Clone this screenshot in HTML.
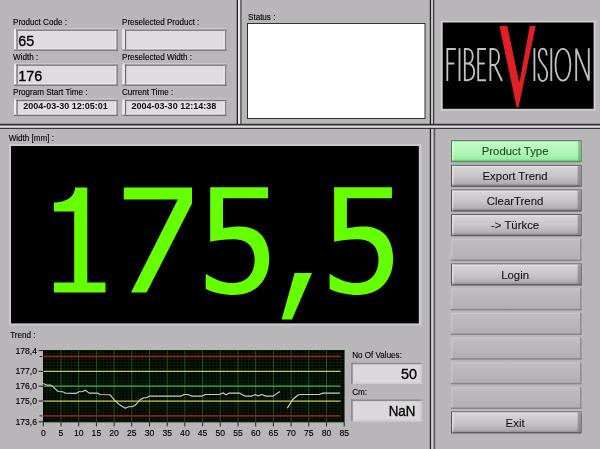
<!DOCTYPE html>
<html><head><meta charset="utf-8"><title>FiberVision</title>
<style>
html,body{margin:0;padding:0;background:#b8b6b8;overflow:hidden;}
body{width:600px;height:449px;font-family:"Liberation Sans",sans-serif;}
svg{display:block;position:absolute;left:0;top:0;will-change:transform;filter:blur(0.35px);}
text{font-family:"Liberation Sans",sans-serif;}
.l{font-size:8.7px;fill:#000;stroke:#000;stroke-width:0.12px;}
.v{font-size:15.2px;fill:#000;stroke:#000;stroke-width:0.35px;}
.t{font-size:9px;font-weight:bold;fill:#101010;}
.b{font-size:11px;fill:#141414;text-anchor:middle;stroke:#141414;stroke-width:0.1px;}
.ax{font-size:8.6px;fill:#000;stroke:#000;stroke-width:0.14px;}
</style></head><body>
<svg width="600" height="449" viewBox="0 0 600 449">
<defs>
<linearGradient id="gb" x1="0" y1="0" x2="0" y2="1">
<stop offset="0" stop-color="#d8d6d8"/><stop offset="0.55" stop-color="#c6c4c6"/><stop offset="1" stop-color="#aaa8aa"/>
</linearGradient>
<linearGradient id="gg" x1="0" y1="0" x2="0" y2="1">
<stop offset="0" stop-color="#c2fac9"/><stop offset="0.55" stop-color="#b0f6b9"/><stop offset="1" stop-color="#92ee9c"/>
</linearGradient>
<linearGradient id="gd" x1="0" y1="0" x2="0" y2="1">
<stop offset="0" stop-color="#c0bec0"/><stop offset="1" stop-color="#b0aeb0"/>
</linearGradient>
</defs>
<rect x="0" y="0" width="600" height="449" fill="#b8b6b8"/>

<!-- separators -->
<rect x="236.7" y="0" width="1.5" height="125" fill="#222222"/>
<rect x="238.1" y="0" width="2.1" height="125" fill="#ecebec"/>
<rect x="240.2" y="0" width="1.5" height="125" fill="#5c5c5c"/>
<rect x="429.8" y="0" width="1.4" height="125" fill="#1e1e1e"/>
<rect x="431.1" y="0" width="1.9" height="125" fill="#c8c7c8"/>
<rect x="433" y="0" width="1.2" height="125" fill="#3c3c3c"/>
<rect x="429.8" y="128" width="1.5" height="321" fill="#1e1e1e"/>
<rect x="431.2" y="128" width="2.4" height="321" fill="#cecdce"/>
<rect x="433.6" y="128" width="1.6" height="321" fill="#585858"/>
<rect x="0" y="123.8" width="600" height="5.1" fill="#2c2c2c"/>
<rect x="0" y="125.5" width="600" height="2.3" fill="#dedcde"/>

<text class="l" transform="translate(13,24.6) scale(0.93,1)">Product Code :</text>
<text class="l" transform="translate(122,24.6) scale(0.93,1)">Preselected Product :</text>
<text class="l" transform="translate(13,59.6) scale(0.93,1)">Width :</text>
<text class="l" transform="translate(122,59.6) scale(0.93,1)">Preselected Width :</text>
<text class="l" transform="translate(13,94.6) scale(0.93,1)">Program Start Time :</text>
<text class="l" transform="translate(122,94.6) scale(0.93,1)">Current Time :</text>
<rect x="14" y="28.1" width="104" height="1.5" fill="#cbc9cb"/>
<rect x="14" y="29.5" width="104" height="21.3" fill="#dedcde"/>
<rect x="14" y="29.5" width="2.4" height="20.7" fill="#efeeef"/>
<rect x="16.4" y="29.5" width="1.3" height="20.0" fill="#6e6e6e"/>
<rect x="16.4" y="29.5" width="101.6" height="1.3" fill="#727072"/>
<rect x="115" y="30.8" width="1.5" height="18.7" fill="#ebeaeb"/>
<rect x="17.7" y="48.3" width="98.8" height="1.3" fill="#ecebec"/>
<rect x="116.4" y="29.5" width="1.6" height="21.3" fill="#878587"/>
<rect x="14" y="49.5" width="104" height="1.4" fill="#757375"/>
<rect x="122.5" y="28.1" width="104" height="1.5" fill="#cbc9cb"/>
<rect x="122.5" y="29.5" width="104" height="21.3" fill="#dedcde"/>
<rect x="122.5" y="29.5" width="2.4" height="20.7" fill="#efeeef"/>
<rect x="124.9" y="29.5" width="1.3" height="20.0" fill="#6e6e6e"/>
<rect x="124.9" y="29.5" width="101.6" height="1.3" fill="#727072"/>
<rect x="223.5" y="30.8" width="1.5" height="18.7" fill="#ebeaeb"/>
<rect x="126.2" y="48.3" width="98.8" height="1.3" fill="#ecebec"/>
<rect x="224.9" y="29.5" width="1.6" height="21.3" fill="#878587"/>
<rect x="122.5" y="49.5" width="104" height="1.4" fill="#757375"/>
<rect x="14" y="63.1" width="104" height="1.5" fill="#cbc9cb"/>
<rect x="14" y="64.5" width="104" height="21.3" fill="#dedcde"/>
<rect x="14" y="64.5" width="2.4" height="20.7" fill="#efeeef"/>
<rect x="16.4" y="64.5" width="1.3" height="20.0" fill="#6e6e6e"/>
<rect x="16.4" y="64.5" width="101.6" height="1.3" fill="#727072"/>
<rect x="115" y="65.8" width="1.5" height="18.7" fill="#ebeaeb"/>
<rect x="17.7" y="83.3" width="98.8" height="1.3" fill="#ecebec"/>
<rect x="116.4" y="64.5" width="1.6" height="21.3" fill="#878587"/>
<rect x="14" y="84.5" width="104" height="1.4" fill="#757375"/>
<rect x="122.5" y="63.1" width="104" height="1.5" fill="#cbc9cb"/>
<rect x="122.5" y="64.5" width="104" height="21.3" fill="#dedcde"/>
<rect x="122.5" y="64.5" width="2.4" height="20.7" fill="#efeeef"/>
<rect x="124.9" y="64.5" width="1.3" height="20.0" fill="#6e6e6e"/>
<rect x="124.9" y="64.5" width="101.6" height="1.3" fill="#727072"/>
<rect x="223.5" y="65.8" width="1.5" height="18.7" fill="#ebeaeb"/>
<rect x="126.2" y="83.3" width="98.8" height="1.3" fill="#ecebec"/>
<rect x="224.9" y="64.5" width="1.6" height="21.3" fill="#878587"/>
<rect x="122.5" y="84.5" width="104" height="1.4" fill="#757375"/>
<rect x="14" y="98.39999999999999" width="104" height="1.5" fill="#cbc9cb"/>
<rect x="14" y="99.8" width="104" height="16.2" fill="#dedcde"/>
<rect x="14" y="99.8" width="2.4" height="15.6" fill="#efeeef"/>
<rect x="16.4" y="99.8" width="1.3" height="14.899999999999999" fill="#6e6e6e"/>
<rect x="16.4" y="99.8" width="101.6" height="1.3" fill="#727072"/>
<rect x="115" y="101.1" width="1.5" height="13.6" fill="#ebeaeb"/>
<rect x="17.7" y="113.5" width="98.8" height="1.3" fill="#ecebec"/>
<rect x="116.4" y="99.8" width="1.6" height="16.2" fill="#878587"/>
<rect x="14" y="114.7" width="104" height="1.4" fill="#757375"/>
<rect x="122.5" y="98.39999999999999" width="104" height="1.5" fill="#cbc9cb"/>
<rect x="122.5" y="99.8" width="104" height="16.2" fill="#dedcde"/>
<rect x="122.5" y="99.8" width="2.4" height="15.6" fill="#efeeef"/>
<rect x="124.9" y="99.8" width="1.3" height="14.899999999999999" fill="#6e6e6e"/>
<rect x="124.9" y="99.8" width="101.6" height="1.3" fill="#727072"/>
<rect x="223.5" y="101.1" width="1.5" height="13.6" fill="#ebeaeb"/>
<rect x="126.2" y="113.5" width="98.8" height="1.3" fill="#ecebec"/>
<rect x="224.9" y="99.8" width="1.6" height="16.2" fill="#878587"/>
<rect x="122.5" y="114.7" width="104" height="1.4" fill="#757375"/>
<text class="v" transform="translate(18.2,45.5) scale(0.945,1)">65</text>
<text class="v" transform="translate(18.2,80.5) scale(0.945,1)">176</text>
<text class="t" x="23.2" y="109.2">2004-03-30 12:05:01</text>
<text class="t" x="131.6" y="109.2">2004-03-30 12:14:38</text>
<text class="l" transform="translate(248,19.6) scale(0.93,1)">Status :</text>
<rect x="247" y="23" width="178.5" height="96" fill="#303030"/>
<rect x="248" y="24" width="176.5" height="94" fill="#ffffff"/>
<rect x="440.7" y="20.8" width="154.8" height="89.8" fill="#d2d0d2"/>
<rect x="442.7" y="22.5" width="150.9" height="86.3" fill="#000"/>
<g fill="none" stroke="#c0c0c0" stroke-width="1.85" stroke-linejoin="miter">
<path d="M447.3,81 V49 H455.8 M447.3,63.5 H454.4"/>
<path d="M459.5,48.2 V81"/>
<path d="M464.8,81 V49 H467.5 C474.5,49 474.5,63.5 467.5,63.5 H464.8 M467.5,63.5 C476.5,63.5 476.5,80.2 467.5,80.2 H464.8"/>
<path d="M486,49 H478.2 V80.2 H486 M478.2,63.5 H484.8"/>
<path d="M490.4,81 V49 H493.5 C500.8,49 500.8,65 493.5,65 H490.4 M494.5,65 L502,81"/>
<path d="M534.4,48.2 V81"/>
<path d="M546.6,55.5 C546.6,46.5 538.8,46.5 538.8,55 C538.8,64 547.2,65 547.2,74 C547.2,83.5 538.4,83.5 538.4,73.5"/>
<path d="M551.3,48.2 V81"/>
<path d="M562.9,48.8 C553,48.8 553,80.6 562.9,80.6 C572.8,80.6 572.8,48.8 562.9,48.8 Z"/>
<path d="M576.2,81 V48.6 L588.8,80.6 V48.2"/>
</g>
<path d="M499.4,26 L507.3,26 L519.3,83 L529.8,26 L535.7,26 L518.6,107.2 L516.6,107.2 Z" fill="#e02024"/>

<text class="l" transform="translate(8.7,140.8) scale(0.93,1)">Width [mm] :</text>
<rect x="9" y="144" width="412.5" height="181.5" fill="#cccacc"/>
<rect x="11" y="146" width="407.8" height="177.4" fill="#000"/>
<g fill="#66ff00">
<path d="M75.2,187.4 L87.3,187.4 L87.3,282.4 L105.5,282.4 L105.5,292.6 L54,292.6 L54,282.4 L74.2,282.4 L74.2,211.6 L54,211.6 L54,202.4 C66,202 74,198 75.2,187.4 Z"/>
<path d="M123.8,187.4 L192,187.4 L192,203.5 L146.6,292.6 L131,292.6 L177.8,199.4 L123.8,199.4 Z"/>
<path d="M210.2,187.3 L268,187.3 L268,198.3 L223,198.3 L223,228.2 C229,227 235,226.5 240,226.5 C258,226.5 269.2,238 269.2,259 C269.2,281 255,295 234,295 C223,295 213,292.5 205.7,289 L205.7,274.2 L206.8,274.2 C214,279.5 224,283 233,283 C246,283 254.6,274 254.6,260 C254.6,246 247,239.2 233,239.2 C225,239.2 217,240.3 210.2,241.8 Z"/>
<path transform="translate(123.9,0)" d="M210.2,187.3 L268,187.3 L268,198.3 L223,198.3 L223,228.2 C229,227 235,226.5 240,226.5 C258,226.5 269.2,238 269.2,259 C269.2,281 255,295 234,295 C223,295 213,292.5 205.7,289 L205.7,274.2 L206.8,274.2 C214,279.5 224,283 233,283 C246,283 254.6,274 254.6,260 C254.6,246 247,239.2 233,239.2 C225,239.2 217,240.3 210.2,241.8 Z"/>
<path d="M294.6,273 L312,273 L292,319.4 L281.6,319.4 Z"/>
</g>
<text class="l" transform="translate(10.2,338.2) scale(0.93,1)">Trend :</text>
<rect x="43.0" y="350.0" width="301.5" height="72.1" fill="#000"/>
<path d="M46.84,350.6 V421.8 M50.38,350.6 V421.8 M53.92,350.6 V421.8 M57.46,350.6 V421.8 M64.54,350.6 V421.8 M68.08,350.6 V421.8 M71.62,350.6 V421.8 M75.16,350.6 V421.8 M82.24,350.6 V421.8 M85.78,350.6 V421.8 M89.32,350.6 V421.8 M92.86,350.6 V421.8 M99.94,350.6 V421.8 M103.48,350.6 V421.8 M107.02,350.6 V421.8 M110.56,350.6 V421.8 M117.64,350.6 V421.8 M121.18,350.6 V421.8 M124.72,350.6 V421.8 M128.26,350.6 V421.8 M135.34,350.6 V421.8 M138.88,350.6 V421.8 M142.42,350.6 V421.8 M145.96,350.6 V421.8 M153.04,350.6 V421.8 M156.58,350.6 V421.8 M160.12,350.6 V421.8 M163.66,350.6 V421.8 M170.74,350.6 V421.8 M174.28,350.6 V421.8 M177.82,350.6 V421.8 M181.36,350.6 V421.8 M188.44,350.6 V421.8 M191.98,350.6 V421.8 M195.52,350.6 V421.8 M199.06,350.6 V421.8 M206.14,350.6 V421.8 M209.68,350.6 V421.8 M213.22,350.6 V421.8 M216.76,350.6 V421.8 M223.84,350.6 V421.8 M227.38,350.6 V421.8 M230.92,350.6 V421.8 M234.46,350.6 V421.8 M241.54,350.6 V421.8 M245.08,350.6 V421.8 M248.62,350.6 V421.8 M252.16,350.6 V421.8 M259.24,350.6 V421.8 M262.78,350.6 V421.8 M266.32,350.6 V421.8 M269.86,350.6 V421.8 M276.94,350.6 V421.8 M280.48,350.6 V421.8 M284.02,350.6 V421.8 M287.56,350.6 V421.8 M294.64,350.6 V421.8 M298.18,350.6 V421.8 M301.72,350.6 V421.8 M305.26,350.6 V421.8 M312.34,350.6 V421.8 M315.88,350.6 V421.8 M319.42,350.6 V421.8 M322.96,350.6 V421.8 M330.04,350.6 V421.8 M333.58,350.6 V421.8 M337.12,350.6 V421.8 M340.66,350.6 V421.8 M43.3,350.60 H344.2 M43.3,353.57 H344.2 M43.3,356.53 H344.2 M43.3,359.50 H344.2 M43.3,362.47 H344.2 M43.3,365.43 H344.2 M43.3,368.40 H344.2 M43.3,371.37 H344.2 M43.3,374.33 H344.2 M43.3,377.30 H344.2 M43.3,380.27 H344.2 M43.3,383.23 H344.2 M43.3,386.20 H344.2 M43.3,389.17 H344.2 M43.3,392.13 H344.2 M43.3,395.10 H344.2 M43.3,398.07 H344.2 M43.3,401.03 H344.2 M43.3,404.00 H344.2 M43.3,406.97 H344.2 M43.3,409.93 H344.2 M43.3,412.90 H344.2 M43.3,415.87 H344.2 M43.3,418.83 H344.2 M43.3,421.80 H344.2" stroke="#072407" stroke-width="0.9" fill="none"/>
<path d="M61.00,350.6 V421.8 M78.70,350.6 V421.8 M96.40,350.6 V421.8 M114.10,350.6 V421.8 M131.80,350.6 V421.8 M149.50,350.6 V421.8 M167.20,350.6 V421.8 M184.90,350.6 V421.8 M202.60,350.6 V421.8 M220.30,350.6 V421.8 M238.00,350.6 V421.8 M255.70,350.6 V421.8 M273.40,350.6 V421.8 M291.10,350.6 V421.8 M308.80,350.6 V421.8 M326.50,350.6 V421.8" stroke="#156415" stroke-width="1" fill="none"/>
<path d="M43.3,356.53 H340.66 M43.3,415.87 H340.66" stroke="#921b1b" stroke-width="1.9" fill="none"/>
<path d="M43.3,371.37 H340.66 M43.3,401.03 H340.66" stroke="#cbcb52" stroke-width="1.25" fill="none"/>
<path d="M43.3,386.20 H340.66" stroke="#44bc30" stroke-width="1.3" fill="none"/>
<path d="M43.2,383.5 L46.7,385.1 L50.7,385.1 L54.7,388.3 L58.1,391.5 L62.7,391.8 L65.3,393.1 L76,393.4 L78.7,391.8 L82.7,391.5 L85.3,390.2 L89.3,393.1 L97.3,393.1 L100,394.5 L109.9,394.7 L114.7,400.3 L120,405.1 L125.3,408.3 L128.5,406.7 L132,406.7 L135.5,404.9 L140,399.8 L144,397.7 L146.7,397.7 L149.3,396.1 L181.3,396.1 L184,394.5 L188,394.5 L191.5,396.1 L202,396.1 L205.5,394.5 L219.3,394.5 L223.3,392.9 L226,394.7 L229.5,393.1 L239.3,393.1 L244.7,396.1 L251.9,396.1 L255.3,394.5 L258,396.1 L261.5,394.5 L266,396.1 L273.2,396.1 L279.9,391.5 M287.3,408.1 L292.7,399.5 L298,395 L300.7,394.5 L319.3,394.5 L322.8,393.1 L339.9,393.1" stroke="#cccccc" stroke-width="1.15" fill="none" stroke-linejoin="round"/>
<path d="M38.6,350.60 H43.3 M38.6,371.37 H43.3 M38.6,386.20 H43.3 M38.6,401.03 H43.3 M38.6,421.80 H43.3 M39.6,356.53 H42.4 M39.6,415.87 H42.4 M43.30,422.3 V426.40000000000003 M61.00,422.3 V426.40000000000003 M78.70,422.3 V426.40000000000003 M96.40,422.3 V426.40000000000003 M114.10,422.3 V426.40000000000003 M131.80,422.3 V426.40000000000003 M149.50,422.3 V426.40000000000003 M167.20,422.3 V426.40000000000003 M184.90,422.3 V426.40000000000003 M202.60,422.3 V426.40000000000003 M220.30,422.3 V426.40000000000003 M238.00,422.3 V426.40000000000003 M255.70,422.3 V426.40000000000003 M273.40,422.3 V426.40000000000003 M291.10,422.3 V426.40000000000003 M308.80,422.3 V426.40000000000003 M326.50,422.3 V426.40000000000003 M344.20,422.3 V426.40000000000003" stroke="#202020" stroke-width="1" fill="none"/>
<text class="ax" text-anchor="end" x="37" y="353.60">178,4</text>
<text class="ax" text-anchor="end" x="37" y="374.37">177,0</text>
<text class="ax" text-anchor="end" x="37" y="389.20">176,0</text>
<text class="ax" text-anchor="end" x="37" y="404.03">175,0</text>
<text class="ax" text-anchor="end" x="37" y="424.80">173,6</text>
<text class="ax" text-anchor="middle" x="43.30" y="435.8">0</text>
<text class="ax" text-anchor="middle" x="61.00" y="435.8">5</text>
<text class="ax" text-anchor="middle" x="78.70" y="435.8">10</text>
<text class="ax" text-anchor="middle" x="96.40" y="435.8">15</text>
<text class="ax" text-anchor="middle" x="114.10" y="435.8">20</text>
<text class="ax" text-anchor="middle" x="131.80" y="435.8">25</text>
<text class="ax" text-anchor="middle" x="149.50" y="435.8">30</text>
<text class="ax" text-anchor="middle" x="167.20" y="435.8">35</text>
<text class="ax" text-anchor="middle" x="184.90" y="435.8">40</text>
<text class="ax" text-anchor="middle" x="202.60" y="435.8">45</text>
<text class="ax" text-anchor="middle" x="220.30" y="435.8">50</text>
<text class="ax" text-anchor="middle" x="238.00" y="435.8">55</text>
<text class="ax" text-anchor="middle" x="255.70" y="435.8">60</text>
<text class="ax" text-anchor="middle" x="273.40" y="435.8">65</text>
<text class="ax" text-anchor="middle" x="291.10" y="435.8">70</text>
<text class="ax" text-anchor="middle" x="308.80" y="435.8">75</text>
<text class="ax" text-anchor="middle" x="326.50" y="435.8">80</text>
<text class="ax" text-anchor="middle" x="344.20" y="435.8">85</text>
<text class="l" transform="translate(352.2,358.4) scale(0.93,1)">No Of Values:</text>
<rect x="351" y="362.5" width="70.5" height="21.5" fill="#dad8da"/>
<rect x="351" y="362.5" width="70.5" height="1.8" fill="#8c8c8c"/>
<rect x="351" y="362.5" width="1.8" height="21.5" fill="#8c8c8c"/>
<rect x="352.8" y="382.2" width="68.7" height="1.8" fill="#cfcdcf"/>
<rect x="419.7" y="364.3" width="1.8" height="19.7" fill="#cfcdcf"/>
<text class="v" text-anchor="end" transform="translate(417,379.1) scale(0.945,1)">50</text>
<text class="l" transform="translate(352.2,394.8) scale(0.93,1)">Cm:</text>
<rect x="351" y="399.3" width="70.5" height="22" fill="#dad8da"/>
<rect x="351" y="399.3" width="70.5" height="1.8" fill="#8c8c8c"/>
<rect x="351" y="399.3" width="1.8" height="22" fill="#8c8c8c"/>
<rect x="352.8" y="419.5" width="68.7" height="1.8" fill="#cfcdcf"/>
<rect x="419.7" y="401.1" width="1.8" height="20.2" fill="#cfcdcf"/>
<text class="v" text-anchor="end" transform="translate(415.3,416) scale(0.872,1)">NaN</text>
<rect x="451" y="140.2" width="130.6" height="22" fill="#587058"/>
<rect x="452" y="141.2" width="128.6" height="20" fill="url(#gg)"/>
<rect x="452" y="141.2" width="1.5" height="20" fill="#d4ffd8" opacity="0.8"/>
<rect x="578.1" y="141.2" width="2.5" height="20" fill="#60b868" opacity="0.7"/>
<rect x="452" y="159.7" width="128.6" height="1.5" fill="#60b868" opacity="0.6"/>
<text class="b" style="fill:#1c4c20;stroke:#1c4c20" transform="translate(515.0999999999999,155.45) scale(1.035,1)">Product Type</text>
<rect x="451" y="164.86" width="130.6" height="22" fill="#545454"/>
<rect x="452" y="165.86" width="128.6" height="19.5" fill="url(#gb)"/>
<rect x="452" y="165.86" width="128.6" height="1.3" fill="#e4e2e4" opacity="0.9"/>
<rect x="452" y="165.86" width="1.6" height="20" fill="#e4e2e4" opacity="0.8"/>
<rect x="577.6" y="165.86" width="3" height="20" fill="#808080" opacity="0.7"/>
<rect x="452" y="183.86" width="128.6" height="2" fill="#8a888a" opacity="0.45"/>
<text class="b" transform="translate(515.0999999999999,180.11) scale(1.035,1)">Export Trend</text>
<rect x="451" y="189.52" width="130.6" height="22" fill="#545454"/>
<rect x="452" y="190.52" width="128.6" height="19.5" fill="url(#gb)"/>
<rect x="452" y="190.52" width="128.6" height="1.3" fill="#e4e2e4" opacity="0.9"/>
<rect x="452" y="190.52" width="1.6" height="20" fill="#e4e2e4" opacity="0.8"/>
<rect x="577.6" y="190.52" width="3" height="20" fill="#808080" opacity="0.7"/>
<rect x="452" y="208.52" width="128.6" height="2" fill="#8a888a" opacity="0.45"/>
<text class="b" transform="translate(515.0999999999999,204.77) scale(1.035,1)">ClearTrend</text>
<rect x="451" y="214.18" width="130.6" height="22" fill="#545454"/>
<rect x="452" y="215.18" width="128.6" height="19.5" fill="url(#gb)"/>
<rect x="452" y="215.18" width="128.6" height="1.3" fill="#e4e2e4" opacity="0.9"/>
<rect x="452" y="215.18" width="1.6" height="20" fill="#e4e2e4" opacity="0.8"/>
<rect x="577.6" y="215.18" width="3" height="20" fill="#808080" opacity="0.7"/>
<rect x="452" y="233.18" width="128.6" height="2" fill="#8a888a" opacity="0.45"/>
<text class="b" transform="translate(515.0999999999999,229.43) scale(1.035,1)">-&gt; Türkce</text>
<rect x="451" y="238.84" width="130.6" height="22" fill="url(#gd)"/>
<rect x="451" y="238.84" width="130.6" height="1.2" fill="#c8c6c8"/>
<rect x="451" y="238.84" width="1.5" height="22" fill="#c4c2c4"/>
<rect x="451" y="259.54" width="130.6" height="1.5" fill="#888688"/>
<rect x="580.1" y="238.84" width="1.5" height="22" fill="#8e8c8e"/>
<rect x="451" y="263.5" width="130.6" height="22" fill="#545454"/>
<rect x="452" y="264.5" width="128.6" height="19.5" fill="url(#gb)"/>
<rect x="452" y="264.5" width="128.6" height="1.3" fill="#e4e2e4" opacity="0.9"/>
<rect x="452" y="264.5" width="1.6" height="20" fill="#e4e2e4" opacity="0.8"/>
<rect x="577.6" y="264.5" width="3" height="20" fill="#808080" opacity="0.7"/>
<rect x="452" y="282.5" width="128.6" height="2" fill="#8a888a" opacity="0.45"/>
<text class="b" transform="translate(515.0999999999999,278.75) scale(1.035,1)">Login</text>
<rect x="451" y="288.16" width="130.6" height="22" fill="url(#gd)"/>
<rect x="451" y="288.16" width="130.6" height="1.2" fill="#c8c6c8"/>
<rect x="451" y="288.16" width="1.5" height="22" fill="#c4c2c4"/>
<rect x="451" y="308.86" width="130.6" height="1.5" fill="#888688"/>
<rect x="580.1" y="288.16" width="1.5" height="22" fill="#8e8c8e"/>
<rect x="451" y="312.82" width="130.6" height="22" fill="url(#gd)"/>
<rect x="451" y="312.82" width="130.6" height="1.2" fill="#c8c6c8"/>
<rect x="451" y="312.82" width="1.5" height="22" fill="#c4c2c4"/>
<rect x="451" y="333.52" width="130.6" height="1.5" fill="#888688"/>
<rect x="580.1" y="312.82" width="1.5" height="22" fill="#8e8c8e"/>
<rect x="451" y="337.48" width="130.6" height="22" fill="url(#gd)"/>
<rect x="451" y="337.48" width="130.6" height="1.2" fill="#c8c6c8"/>
<rect x="451" y="337.48" width="1.5" height="22" fill="#c4c2c4"/>
<rect x="451" y="358.18" width="130.6" height="1.5" fill="#888688"/>
<rect x="580.1" y="337.48" width="1.5" height="22" fill="#8e8c8e"/>
<rect x="451" y="362.14" width="130.6" height="22" fill="url(#gd)"/>
<rect x="451" y="362.14" width="130.6" height="1.2" fill="#c8c6c8"/>
<rect x="451" y="362.14" width="1.5" height="22" fill="#c4c2c4"/>
<rect x="451" y="382.84" width="130.6" height="1.5" fill="#888688"/>
<rect x="580.1" y="362.14" width="1.5" height="22" fill="#8e8c8e"/>
<rect x="451" y="386.8" width="130.6" height="22" fill="url(#gd)"/>
<rect x="451" y="386.8" width="130.6" height="1.2" fill="#c8c6c8"/>
<rect x="451" y="386.8" width="1.5" height="22" fill="#c4c2c4"/>
<rect x="451" y="407.5" width="130.6" height="1.5" fill="#888688"/>
<rect x="580.1" y="386.8" width="1.5" height="22" fill="#8e8c8e"/>
<rect x="451" y="411.46" width="130.6" height="22" fill="#545454"/>
<rect x="452" y="412.46" width="128.6" height="19.5" fill="url(#gb)"/>
<rect x="452" y="412.46" width="128.6" height="1.3" fill="#e4e2e4" opacity="0.9"/>
<rect x="452" y="412.46" width="1.6" height="20" fill="#e4e2e4" opacity="0.8"/>
<rect x="577.6" y="412.46" width="3" height="20" fill="#808080" opacity="0.7"/>
<rect x="452" y="430.46" width="128.6" height="2" fill="#8a888a" opacity="0.45"/>
<text class="b" transform="translate(515.0999999999999,426.71) scale(1.035,1)">Exit</text>
</svg></body></html>
